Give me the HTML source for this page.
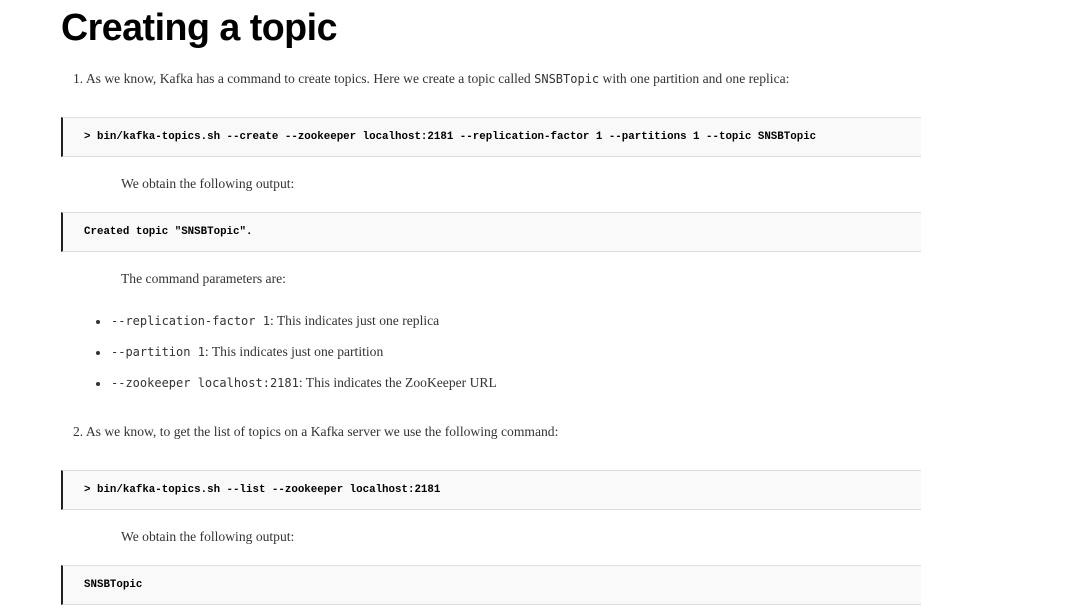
<!DOCTYPE html>
<html><head><meta charset="utf-8"><style>
body{margin:0;width:1066px;height:611px;background:#fff;overflow:hidden;position:relative;font-family:"Liberation Serif",serif;font-size:13.6px;color:#333}
.a{position:absolute;white-space:nowrap;line-height:18px}
h1{position:absolute;left:61px;top:2px;margin:0;font-family:"Liberation Sans",sans-serif;font-weight:bold;font-size:37.6px;color:#000;letter-spacing:-0.5px;line-height:50px}
code{font-family:"DejaVu Sans Mono",monospace;font-size:12px;color:#333}
.pre{position:absolute;left:61px;height:38px;background:#f9f9f9;border-top:1px solid #ddd;border-bottom:1px solid #ddd;border-left:2px solid #222;font-family:"Liberation Mono",monospace;font-weight:bold;font-size:10.8px;color:#000;line-height:38px;padding-left:21px;box-sizing:content-box;white-space:pre}
.dot{position:absolute;width:4px;height:4px;border-radius:50%;background:#333}
</style></head><body>
<h1>Creating a topic</h1>
<div class="a" style="left:73px;top:70px">1. As we know, Kafka has a command to create topics. Here we create a topic called <code>SNSBTopic</code> with one partition and one replica:</div>
<div class="pre" style="top:117px;width:837px">&gt; bin/kafka-topics.sh --create --zookeeper localhost:2181 --replication-factor 1 --partitions 1 --topic SNSBTopic</div>
<div class="a" style="left:121px;top:175px">We obtain the following output:</div>
<div class="pre" style="top:212px;width:837px">Created topic "SNSBTopic".</div>
<div class="a" style="left:121px;top:270px">The command parameters are:</div>
<div class="dot" style="left:96px;top:320px"></div>
<div class="a" style="left:111px;top:312px"><code>--replication-factor 1</code>: This indicates just one replica</div>
<div class="dot" style="left:96px;top:351px"></div>
<div class="a" style="left:111px;top:343px"><code>--partition 1</code>: This indicates just one partition</div>
<div class="dot" style="left:96px;top:382px"></div>
<div class="a" style="left:111px;top:374px"><code>--zookeeper localhost:2181</code>: This indicates the ZooKeeper URL</div>
<div class="a" style="left:73px;top:423px">2. As we know, to get the list of topics on a Kafka server we use the following command:</div>
<div class="pre" style="top:470px;width:837px">&gt; bin/kafka-topics.sh --list --zookeeper localhost:2181</div>
<div class="a" style="left:121px;top:528px">We obtain the following output:</div>
<div class="pre" style="top:565px;width:837px">SNSBTopic</div>
</body></html>
